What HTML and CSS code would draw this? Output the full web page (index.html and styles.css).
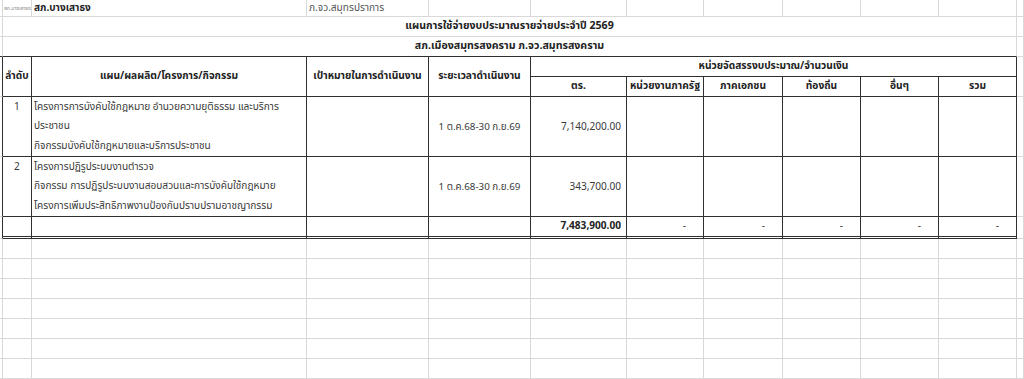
FILE: index.html
```html
<!DOCTYPE html>
<html lang="th">
<head>
<meta charset="utf-8">
<title>แผนการใช้จ่ายงบประมาณรายจ่ายประจำปี 2569</title>
<link rel="stylesheet" href="styles.css">
</head>
<body>
<table class="sheet">
  <colgroup>
    <col class="w-stub"><col class="w-a"><col class="w-b"><col class="w-c"><col class="w-d"><col class="w-e"><col class="w-f"><col class="w-g"><col class="w-h"><col class="w-i"><col class="w-j"><col class="w-rest">
  </colgroup>
  <tbody>
    <tr class="r-top">
      <td></td>
      <td class="tiny">สภ.บางเสาธง</td>
      <td class="name">สภ.บางเสาธง</td>
      <td class="prov">ภ.จว.สมุทรปราการ</td>
      <td></td><td></td><td></td><td></td><td></td><td></td><td></td><td></td>
    </tr>
    <tr class="r-title">
      <td></td>
      <td colspan="10" class="title">แผนการใช้จ่ายงบประมาณรายจ่ายประจำปี 2569</td>
      <td></td>
    </tr>
    <tr class="r-title">
      <td class="dk-b"></td>
      <td colspan="10" class="title dk-b">สภ.เมืองสมุทรสงคราม ภ.จว.สมุทรสงคราม</td>
      <td></td>
    </tr>
    <tr class="r-head">
      <td class="dk-r" rowspan="2"></td>
      <td rowspan="2" class="hd dk-r dk-b">ลำดับ</td>
      <td rowspan="2" class="hd dk-r dk-b">แผน/ผลผลิต/โครงการ/กิจกรรม</td>
      <td rowspan="2" class="hd dk-r dk-b">เป้าหมายในการดำเนินงาน</td>
      <td rowspan="2" class="hd dk-r dk-b">ระยะเวลาดำเนินงาน</td>
      <td colspan="6" class="hd dk-r dk-b">หน่วยจัดสรรงบประมาณ/จำนวนเงิน</td>
      <td rowspan="2"></td>
    </tr>
    <tr class="r-head">
      <td class="hd dk-r dk-b">ตร.</td>
      <td class="hd dk-r dk-b">หน่วยงานภาครัฐ</td>
      <td class="hd dk-r dk-b">ภาคเอกชน</td>
      <td class="hd dk-r dk-b">ท้องถิ่น</td>
      <td class="hd dk-r dk-b">อื่นๆ</td>
      <td class="hd dk-r dk-b">รวม</td>
    </tr>
    <tr class="r-data">
      <td class="dk-r"></td>
      <td class="no dk-r dk-b">1</td>
      <td class="txt dk-r dk-b">โครงการการบังคับใช้กฎหมาย อำนวยความยุติธรรม และบริการ<br>ประชาชน<br>กิจกรรมบังคับใช้กฎหมายและบริการประชาชน</td>
      <td class="dk-r dk-b"></td>
      <td class="date dk-r dk-b">1 ต.ค.68-30 ก.ย.69</td>
      <td class="num dk-r dk-b">7,140,200.00</td>
      <td class="dk-r dk-b"></td><td class="dk-r dk-b"></td><td class="dk-r dk-b"></td><td class="dk-r dk-b"></td><td class="dk-r dk-b"></td>
      <td></td>
    </tr>
    <tr class="r-data">
      <td class="dk-r"></td>
      <td class="no dk-r dk-b">2</td>
      <td class="txt dk-r dk-b">โครงการปฏิรูประบบงานตำรวจ<br>กิจกรรม การปฏิรูประบบงานสอบสวนและการบังคับใช้กฎหมาย<br>โครงการเพิ่มประสิทธิภาพงานป้องกันปราบปรามอาชญากรรม</td>
      <td class="dk-r dk-b"></td>
      <td class="date dk-r dk-b">1 ต.ค.68-30 ก.ย.69</td>
      <td class="num dk-r dk-b">343,700.00</td>
      <td class="dk-r dk-b"></td><td class="dk-r dk-b"></td><td class="dk-r dk-b"></td><td class="dk-r dk-b"></td><td class="dk-r dk-b"></td>
      <td></td>
    </tr>
    <tr class="r-total">
      <td class="dk-r"></td>
      <td class="dk-r dbl"></td>
      <td class="dk-r dbl"></td>
      <td class="dk-r dbl"></td>
      <td class="dk-r dbl"></td>
      <td class="num total dk-r dbl">7,483,900.00</td>
      <td class="dash dk-r dbl">-</td>
      <td class="dash dk-r dbl">-</td>
      <td class="dash dk-r dbl">-</td>
      <td class="dash dk-r dbl">-</td>
      <td class="dash dk-r dbl">-</td>
      <td></td>
    </tr>
    <tr class="r-empty"><td></td><td></td><td></td><td></td><td></td><td></td><td></td><td></td><td></td><td></td><td></td><td></td></tr>
    <tr class="r-empty"><td></td><td></td><td></td><td></td><td></td><td></td><td></td><td></td><td></td><td></td><td></td><td></td></tr>
    <tr class="r-empty"><td></td><td></td><td></td><td></td><td></td><td></td><td></td><td></td><td></td><td></td><td></td><td></td></tr>
    <tr class="r-empty"><td></td><td></td><td></td><td></td><td></td><td></td><td></td><td></td><td></td><td></td><td></td><td></td></tr>
    <tr class="r-empty"><td></td><td></td><td></td><td></td><td></td><td></td><td></td><td></td><td></td><td></td><td></td><td></td></tr>
    <tr class="r-empty"><td></td><td></td><td></td><td></td><td></td><td></td><td></td><td></td><td></td><td></td><td></td><td></td></tr>
    <tr class="r-empty"><td></td><td></td><td></td><td></td><td></td><td></td><td></td><td></td><td></td><td></td><td></td><td></td></tr>
  </tbody>
</table>
</body>
</html>
```

FILE: styles.css
```css
html, body {
  margin: 0;
  padding: 0;
  background: #ffffff;
  overflow: hidden;
}

body {
  font-family: Tahoma, "Leelawadee UI", "Noto Sans Thai", "Noto Sans", "DejaVu Sans", sans-serif;
  font-size: 10.1px;
  color: #3a3a3a;
}

.sheet {
  border-collapse: separate;
  border-spacing: 0;
  table-layout: fixed;
  width: 1024px;
}

.w-stub { width: 3px; }
.w-a { width: 29px; }
.w-b { width: 275px; }
.w-c { width: 122px; }
.w-d { width: 102px; }
.w-e { width: 96px; }
.w-f { width: 77px; }
.w-g { width: 79px; }
.w-h { width: 78px; }
.w-i { width: 78px; }
.w-j { width: 78px; }
.w-rest { width: 7px; }

.sheet td {
  padding: 0 2px;
  border-right: 1px solid #d9d9d9;
  border-bottom: 1px solid #d9d9d9;
  white-space: nowrap;
  overflow: hidden;
  vertical-align: middle;
  line-height: 19px;
}

.sheet td:first-child { padding: 0; }

.r-top { height: 17px; }
.sheet .r-top td { line-height: 15px; }
.r-title { height: 20px; }
.r-head { height: 20px; }
.r-data { height: 60px; }
.r-total { height: 22px; }
.r-empty { height: 20px; }

.sheet .dk-r { border-right-color: #303030; }
.sheet .dk-b { border-bottom-color: #303030; }
.sheet .dbl { border-bottom: 3px double #303030; }

.sheet .tiny {
  font-size: 5px;
  color: #888;
  padding: 0 1px;
}

.sheet .name {
  font-weight: bold;
  font-size: 10px;
  color: #1e1e1e;
}

.sheet .prov {
  color: #555;
}

.sheet .title {
  text-align: center;
  font-weight: bold;
  font-size: 10.6px;
  color: #222;
}

.sheet .hd {
  text-align: center;
  font-weight: bold;
  font-size: 10.2px;
  color: #222;
  padding: 0 1px;
}

.sheet .no {
  text-align: center;
  vertical-align: top;
  padding-top: 1px;
  line-height: 19.3px;
}

.sheet .txt {
  vertical-align: top;
  padding-top: 1px;
  line-height: 19.3px;
}

.sheet .date {
  text-align: center;
  font-size: 9.8px;
  padding-top: 2px;
}

.sheet .num {
  text-align: right;
  padding-right: 5px;
  padding-top: 2px;
}

.sheet .total {
  font-weight: bold;
  color: #222;
  padding-top: 0;
}

.sheet .dash {
  text-align: right;
  padding-right: 17px;
}
```
